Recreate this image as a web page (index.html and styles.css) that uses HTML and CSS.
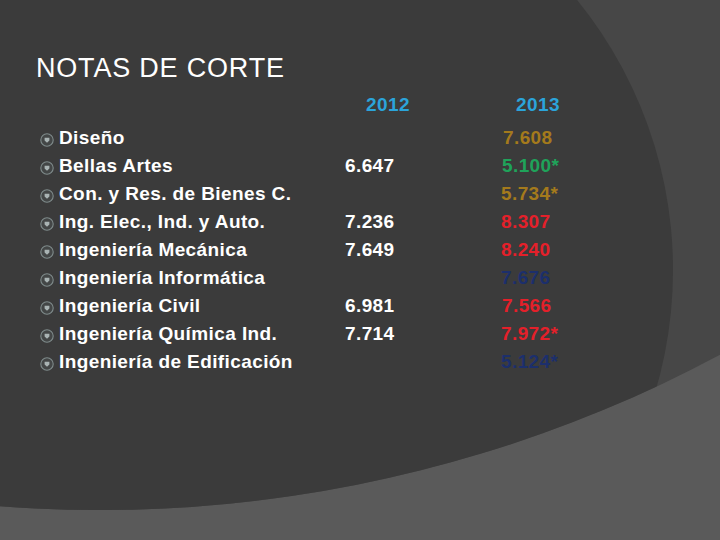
FILE: index.html
```html
<!DOCTYPE html>
<html lang="es">
<head>
<meta charset="utf-8">
<title>Notas de corte</title>
<link rel="stylesheet" href="styles.css">
</head>
<body>
<div class="slide">
  <svg class="backdrop" width="720" height="540" viewBox="0 0 720 540" aria-hidden="true">
    <defs>
      <clipPath id="upper"><circle cx="100" cy="-806" r="1316"/></clipPath>
    </defs>
    <rect width="720" height="540" fill="#5a5a5a"/>
    <g clip-path="url(#upper)">
      <rect width="720" height="540" fill="#474747"/>
      <circle cx="245" cy="270" r="428" fill="#3b3b3b"/>
    </g>
  </svg>

  <div class="content">
    <h1 class="title">NOTAS DE CORTE</h1>
    <div class="grid">
      <div></div>
      <div class="head h2012">2012</div>
      <div class="head h2013">2013</div>

      <div class="label"><svg class="bullet" viewBox="0 0 14 14"><circle cx="7" cy="7" r="6.2"/><path d="M4.6 4.8h4.8v2.6L7 9.8 4.6 7.4z"/></svg>Diseño</div>
      <div class="v12"></div>
      <div class="v13 brown s2">7.608</div>

      <div class="label"><svg class="bullet" viewBox="0 0 14 14"><circle cx="7" cy="7" r="6.2"/><path d="M4.6 4.8h4.8v2.6L7 9.8 4.6 7.4z"/></svg>Bellas Artes</div>
      <div class="v12">6.647</div>
      <div class="v13 green s1">5.100*</div>

      <div class="label"><svg class="bullet" viewBox="0 0 14 14"><circle cx="7" cy="7" r="6.2"/><path d="M4.6 4.8h4.8v2.6L7 9.8 4.6 7.4z"/></svg>Con. y Res. de Bienes C.</div>
      <div class="v12"></div>
      <div class="v13 brown">5.734*</div>

      <div class="label"><svg class="bullet" viewBox="0 0 14 14"><circle cx="7" cy="7" r="6.2"/><path d="M4.6 4.8h4.8v2.6L7 9.8 4.6 7.4z"/></svg>Ing. Elec., Ind. y Auto.</div>
      <div class="v12">7.236</div>
      <div class="v13 red">8.307</div>

      <div class="label"><svg class="bullet" viewBox="0 0 14 14"><circle cx="7" cy="7" r="6.2"/><path d="M4.6 4.8h4.8v2.6L7 9.8 4.6 7.4z"/></svg>Ingeniería Mecánica</div>
      <div class="v12">7.649</div>
      <div class="v13 red">8.240</div>

      <div class="label"><svg class="bullet" viewBox="0 0 14 14"><circle cx="7" cy="7" r="6.2"/><path d="M4.6 4.8h4.8v2.6L7 9.8 4.6 7.4z"/></svg>Ingeniería Informática</div>
      <div class="v12"></div>
      <div class="v13 navy">7.676</div>

      <div class="label"><svg class="bullet" viewBox="0 0 14 14"><circle cx="7" cy="7" r="6.2"/><path d="M4.6 4.8h4.8v2.6L7 9.8 4.6 7.4z"/></svg>Ingeniería Civil</div>
      <div class="v12">6.981</div>
      <div class="v13 red s1">7.566</div>

      <div class="label"><svg class="bullet" viewBox="0 0 14 14"><circle cx="7" cy="7" r="6.2"/><path d="M4.6 4.8h4.8v2.6L7 9.8 4.6 7.4z"/></svg>Ingeniería Química Ind.</div>
      <div class="v12">7.714</div>
      <div class="v13 red">7.972*</div>

      <div class="label"><svg class="bullet" viewBox="0 0 14 14"><circle cx="7" cy="7" r="6.2"/><path d="M4.6 4.8h4.8v2.6L7 9.8 4.6 7.4z"/></svg>Ingeniería de Edificación</div>
      <div class="v12"></div>
      <div class="v13 navy">5.124*</div>
    </div>
  </div>
</div>
</body>
</html>
```

FILE: styles.css
```css
* { box-sizing: border-box; }

html, body {
  margin: 0;
  padding: 0;
  background: #3b3b3b;
}

body {
  font-family: "Liberation Sans", Arial, sans-serif;
  color: #ffffff;
}

.slide {
  position: relative;
  width: 720px;
  height: 540px;
  overflow: hidden;
}

.backdrop {
  position: absolute;
  left: 0;
  top: 0;
  display: block;
}

.content {
  position: relative;
  padding: 52px 0 0 36px;
}

.title {
  margin: 0;
  font-size: 27px;
  line-height: 32px;
  font-weight: normal;
  letter-spacing: 0.8px;
  color: #ffffff;
}

.grid {
  margin-top: 7px;
  margin-left: 4px;
  display: grid;
  grid-template-columns: 305px 156px auto;
  grid-template-rows: 33px repeat(9, 28px);
  font-size: 19px;
  font-weight: bold;
  line-height: 28px;
  letter-spacing: 0.4px;
}

.head {
  color: #2ba4da;
}

.h2012 { padding-left: 21px; }
.h2013 { padding-left: 15px; }

.label {
  display: flex;
  align-items: center;
  gap: 5px;
  white-space: nowrap;
}

.bullet {
  width: 14px;
  height: 14px;
  flex: none;
  margin-top: 3px;
}

.bullet circle {
  fill: #434646;
  stroke: #7f8b8b;
  stroke-width: 1.1;
}

.bullet path {
  fill: #a9b3b3;
}

.v12 { color: #ffffff; }

.s1 { padding-left: 1px; }
.s2 { padding-left: 2px; }

.brown { color: #a47a1c; }
.green { color: #1fa35a; }
.red   { color: #e4202a; }
.navy  { color: #1c2f6c; }
```
